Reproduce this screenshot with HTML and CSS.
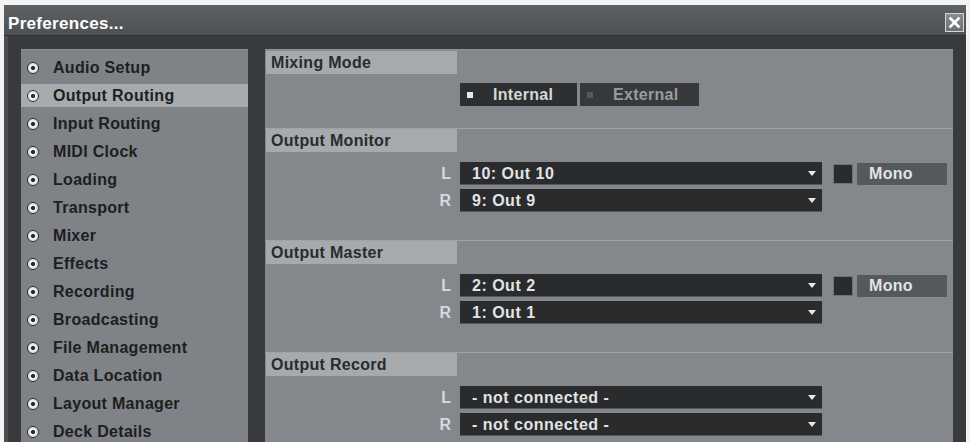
FILE: index.html
```html
<!DOCTYPE html>
<html>
<head>
<meta charset="utf-8">
<link rel="stylesheet" href="styles.css">
</head>
<body>
<div class="window">
  <div class="titlebar">
    <span class="title">Preferences...</span>
    <span class="close">
      <svg width="13" height="13" viewBox="0 0 13 13"><path d="M2.5 2.5 L10.5 10.5 M10.5 2.5 L2.5 10.5" stroke="#ffffff" stroke-width="2.6" stroke-linecap="square"/></svg>
    </span>
  </div>
  <div class="content">
    <ul class="nav">
      <li class="nav-item"><span class="radio"></span>Audio Setup</li>
      <li class="nav-item active"><span class="radio"></span>Output Routing</li>
      <li class="nav-item"><span class="radio"></span>Input Routing</li>
      <li class="nav-item"><span class="radio"></span>MIDI Clock</li>
      <li class="nav-item"><span class="radio"></span>Loading</li>
      <li class="nav-item"><span class="radio"></span>Transport</li>
      <li class="nav-item"><span class="radio"></span>Mixer</li>
      <li class="nav-item"><span class="radio"></span>Effects</li>
      <li class="nav-item"><span class="radio"></span>Recording</li>
      <li class="nav-item"><span class="radio"></span>Broadcasting</li>
      <li class="nav-item"><span class="radio"></span>File Management</li>
      <li class="nav-item"><span class="radio"></span>Data Location</li>
      <li class="nav-item"><span class="radio"></span>Layout Manager</li>
      <li class="nav-item"><span class="radio"></span>Deck Details</li>
    </ul>
    <div class="panel">
      <section class="section first">
        <div class="sec-head">Mixing Mode</div>
        <div class="sec-body mix-body">
          <div class="row">
            <span class="label"></span>
            <div class="toggle">
              <span class="tbtn on"><i class="ind"></i>Internal</span>
              <span class="tbtn off"><i class="ind"></i>External</span>
            </div>
          </div>
        </div>
      </section>
      <section class="section">
        <div class="sec-head">Output Monitor</div>
        <div class="sec-body">
          <div class="row">
            <span class="label">L</span>
            <span class="select">10: Out 10<i class="arrow"></i></span>
            <span class="check"></span>
            <span class="mono">Mono</span>
          </div>
          <div class="row">
            <span class="label">R</span>
            <span class="select">9: Out 9<i class="arrow"></i></span>
          </div>
        </div>
      </section>
      <section class="section">
        <div class="sec-head">Output Master</div>
        <div class="sec-body">
          <div class="row">
            <span class="label">L</span>
            <span class="select">2: Out 2<i class="arrow"></i></span>
            <span class="check"></span>
            <span class="mono">Mono</span>
          </div>
          <div class="row">
            <span class="label">R</span>
            <span class="select">1: Out 1<i class="arrow"></i></span>
          </div>
        </div>
      </section>
      <section class="section">
        <div class="sec-head">Output Record</div>
        <div class="sec-body">
          <div class="row">
            <span class="label">L</span>
            <span class="select">- not connected -<i class="arrow"></i></span>
          </div>
          <div class="row">
            <span class="label">R</span>
            <span class="select">- not connected -<i class="arrow"></i></span>
          </div>
        </div>
      </section>
    </div>
  </div>
</div>
</body>
</html>
```
FILE: styles.css
```css
* { box-sizing: border-box; }
html, body {
  margin: 0;
  padding: 0;
  width: 970px;
  height: 442px;
  overflow: hidden;
  background: #f4f4f4;
  font-family: "Liberation Sans", Arial, sans-serif;
  font-weight: bold;
  font-size: 16px;
}
.window {
  margin: 5px 4px 0 4px;
  height: 437px;
  background: #3b3d40;
  display: flex;
  flex-direction: column;
  overflow: hidden;
}
.titlebar {
  height: 31px;
  flex: none;
  display: flex;
  justify-content: space-between;
  align-items: flex-start;
  background: linear-gradient(#5e6164, #4e5154);
  border-bottom: 1px solid #2f3134;
}
.title {
  color: #ffffff;
  font-size: 17px;
  padding: 8px 0 0 4px;
  line-height: 22px;
  letter-spacing: 0.3px;
}
.close {
  width: 19px;
  height: 19px;
  margin: 8px 2px 0 0;
  border: 1px solid #d4d6d8;
  background: linear-gradient(#8a8d90, #6c6f72);
  display: flex;
  align-items: center;
  justify-content: center;
}
.content {
  flex: 1;
  display: grid;
  grid-template-columns: 227px 1fr;
  column-gap: 17px;
  padding: 13px 13px 0 13px;
  border-left: 4px solid #4b4d50;
  background: #383a3d;
  min-height: 0;
}
.nav {
  list-style: none;
  margin: 0;
  padding: 6px 0 0 0;
  background: #7f8286;
  display: flex;
  flex-direction: column;
  gap: 5px;
  border-top: 1px solid #8c8f93;
}
.nav-item {
  height: 23px;
  line-height: 23px;
  display: flex;
  align-items: center;
  padding-left: 6px;
  color: #1d1e20;
  letter-spacing: 0.3px;
}
.nav-item.active { background: #a8abae; }
.radio {
  width: 12px;
  height: 12px;
  border-radius: 50%;
  border: 1.5px solid #2a2b2d;
  background: radial-gradient(circle, #2a2b2d 0 1.8px, #e8e9ea 2.3px);
  margin-right: 14px;
  flex: none;
}
.panel {
  background: #84888c;
  padding-top: 1px;
  border-top: 1px solid #8f9397;
}
.section { border-top: 1px solid #a0a4a8; }
.section.first { border-top: none; }
.sec-head {
  width: 191px;
  height: 23px;
  line-height: 23px;
  margin-left: 1px;
  padding-left: 5px;
  background: #a7aaad;
  color: #2a2b2d;
  letter-spacing: 0.3px;
}
.sec-body {
  padding: 10px 0 28px 0;
  display: flex;
  flex-direction: column;
  gap: 4px;
}
.mix-body { padding: 9px 0 22px 0; }
.row {
  height: 23px;
  display: flex;
  align-items: center;
}
.label {
  width: 195px;
  padding-right: 9px;
  text-align: right;
  color: #d6d8da;
  flex: none;
}
.select {
  width: 362px;
  height: 23px;
  line-height: 23px;
  padding-left: 12px;
  background: #2a2b2d;
  color: #e2e3e4;
  letter-spacing: 0.5px;
  display: flex;
  align-items: center;
  justify-content: space-between;
  padding-right: 6px;
  border-bottom: 1px solid #56595c;
}
.arrow {
  width: 0;
  height: 0;
  border-left: 4px solid transparent;
  border-right: 4px solid transparent;
  border-top: 5px solid #e8e8e8;
}
.check {
  width: 20px;
  height: 20px;
  margin-left: 11px;
  background: #2a2b2d;
  border: 1px solid #6f7276;
}
.mono {
  width: 90px;
  height: 22px;
  line-height: 22px;
  margin-left: 4px;
  padding-left: 12px;
  background: #56595c;
  color: #e2e3e4;
  letter-spacing: 0.3px;
}
.toggle {
  display: flex;
  gap: 3px;
}
.tbtn {
  height: 23px;
  line-height: 23px;
  display: flex;
  align-items: center;
  padding-left: 7px;
  letter-spacing: 0.3px;
}
.tbtn.on { width: 117px; background: #2e2f31; color: #d7d8d9; }
.tbtn.off { width: 119px; background: #38393b; color: #9a9c9f; }
.ind {
  width: 6px;
  height: 6px;
  margin-right: 20px;
}
.on .ind { background: #e8e8e8; }
.off .ind { background: #55575a; }
```
